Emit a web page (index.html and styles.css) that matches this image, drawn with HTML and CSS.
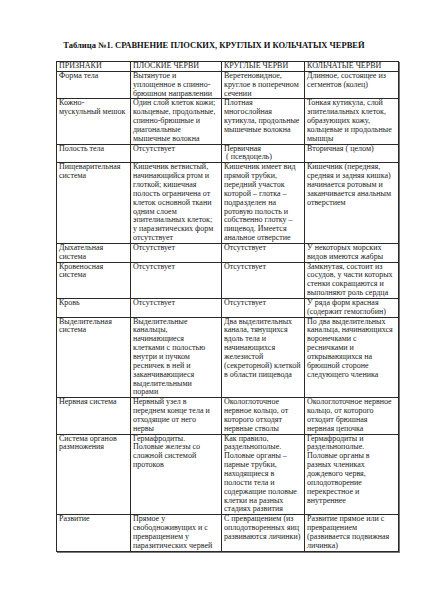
FILE: index.html
```html
<!DOCTYPE html>
<html lang="ru">
<head>
<meta charset="utf-8">
<title>Таблица №1</title>
<link rel="stylesheet" href="styles.css">
</head>
<body>
<div class="page">
  <h1 class="title">Таблица №1. СРАВНЕНИЕ ПЛОСКИХ, КРУГЛЫХ И КОЛЬЧАТЫХ ЧЕРВЕЙ</h1>
  <table class="tbl">
    <colgroup>
      <col class="c1"><col class="c2"><col class="c3"><col class="c4">
    </colgroup>
    <tr class="hdr"><td>ПРИЗНАКИ</td><td>ПЛОСКИЕ ЧЕРВИ</td><td>КРУГЛЫЕ ЧЕРВИ</td><td>КОЛЬЧАТЫЕ ЧЕРВИ</td></tr>
    <tr><td>Форма тела</td><td>Вытянутое и<br>уплощенное в спинно-<br>брюшном направлении</td><td>Веретеновидное,<br>круглое в поперечном<br>сечении</td><td>Длинное, состоящее из<br>сегментов (колец)</td></tr>
    <tr><td>Кожно-<br>мускульный мешок</td><td>Один слой клеток кожи;<br>кольцевые, продольные,<br>спинно-брюшные и<br>диагональные<br>мышечные волокна</td><td>Плотная<br>многослойная<br>кутикула, продольные<br>мышечные волокна</td><td>Тонкая кутикула, слой<br>эпителиальных клеток,<br>образующих кожу,<br>кольцевые и продольные<br>мышцы</td></tr>
    <tr><td>Полость тела</td><td>Отсутствует</td><td>Первичная<br>&nbsp;( псевдоцель)</td><td>Вторичная ( целом)</td></tr>
    <tr><td>Пищеварительная<br>система</td><td>Кишечник ветвистый,<br>начинающийся ртом и<br>глоткой; кишечная<br>полость ограничена от<br>клеток основной ткани<br>одним слоем<br>эпителиальных клеток;<br>у паразитических форм<br>отсутствует</td><td>Кишечник имеет вид<br>прямой трубки,<br>передний участок<br>которой – глотка –<br>подразделен на<br>ротовую полость и<br>собственно глотку –<br>пищевод. Имеется<br>анальное отверстие</td><td>Кишечник (передняя,<br>средняя и задняя кишка)<br>начинается ротовым и<br>заканчивается анальным<br>отверстием</td></tr>
    <tr><td>Дыхательная<br>система</td><td>Отсутствует</td><td>Отсутствует</td><td>У некоторых морских<br>видов имеются жабры</td></tr>
    <tr><td>Кровеносная<br>система</td><td>Отсутствует</td><td>Отсутствует</td><td>Замкнутая, состоит из<br>сосудов, у части которых<br>стенки сокращаются и<br>выполняют роль сердца</td></tr>
    <tr><td>Кровь</td><td>Отсутствует</td><td>Отсутствует</td><td>У ряда форм красная<br>(содержит гемоглобин)</td></tr>
    <tr><td>Выделительная<br>система</td><td>Выделительные<br>канальцы,<br>начинающиеся<br>клетками с полостью<br>внутри и пучком<br>ресничек в ней и<br>заканчивающиеся<br>выделительными<br>порами</td><td>Два выделительных<br>канала, тянущихся<br>вдоль тела и<br>начинающихся<br>железистой<br>(секреторной) клеткой<br>в области пищевода</td><td>По два выделительных<br>канальца, начинающихся<br>воронечками с<br>ресничками и<br>открывающихся на<br>брюшной стороне<br>следующего членика</td></tr>
    <tr><td>Нервная система</td><td>Нервный узел в<br>переднем конце тела и<br>отходящие от него<br>нервы</td><td>Окологлоточное<br>нервное кольцо, от<br>которого отходят<br>нервные стволы</td><td>Окологлоточное нервное<br>кольцо, от которого<br>отходит брюшная<br>нервная цепочка</td></tr>
    <tr><td>Система органов<br>размножения</td><td>Гермафродиты.<br>Половые железы со<br>сложной системой<br>протоков</td><td>Как правило,<br>раздельнополые.<br>Половые органы –<br>парные трубки,<br>находящиеся в<br>полости тела и<br>содержащие половые<br>клетки на разных<br>стадиях развития</td><td>Гермафродиты и<br>раздельнополые.<br>Половые органы в<br>разных члениках<br>дождевого червя,<br>оплодотворение<br>перекрестное и<br>внутреннее</td></tr>
    <tr><td>Развитие</td><td>Прямое у<br>свободноживущих и с<br>превращением у<br>паразитических червей</td><td>С превращением (из<br>оплодотворенных яиц<br>развиваются личинки)</td><td>Развитие прямое или с<br>превращением<br>(развивается подвижная<br>личинка)</td></tr>
  </table>
</div>
</body>
</html>
```
FILE: styles.css
```css
html, body {
  margin: 0;
  padding: 0;
  background: #ffffff;
}
.page {
  width: 424px;
  height: 600px;
  padding-top: 40px;
  box-sizing: border-box;
  font-family: "Liberation Serif", "Times New Roman", serif;
  color: #222;
}
.title {
  margin: 0 0 10px 0;
  padding-left: 4px;
  text-align: center;
  font-size: 8.5px;
  line-height: 11px;
  font-weight: bold;
  color: #111;
}
.tbl {
  margin-left: 56px;
  width: 342px;
  border-collapse: collapse;
  table-layout: fixed;
  font-size: 8px;
  line-height: 8.85px;
  box-shadow: 1px 1px 0 #777;
}
.c1 { width: 74px; }
.c2 { width: 91px; }
.c3 { width: 83px; }
.c4 { width: 94px; }
.tbl td {
  border: 1px solid #2a2a2a;
  padding: 0 1px 0 2px;
  vertical-align: top;
  white-space: nowrap;
  overflow: hidden;
}
```
